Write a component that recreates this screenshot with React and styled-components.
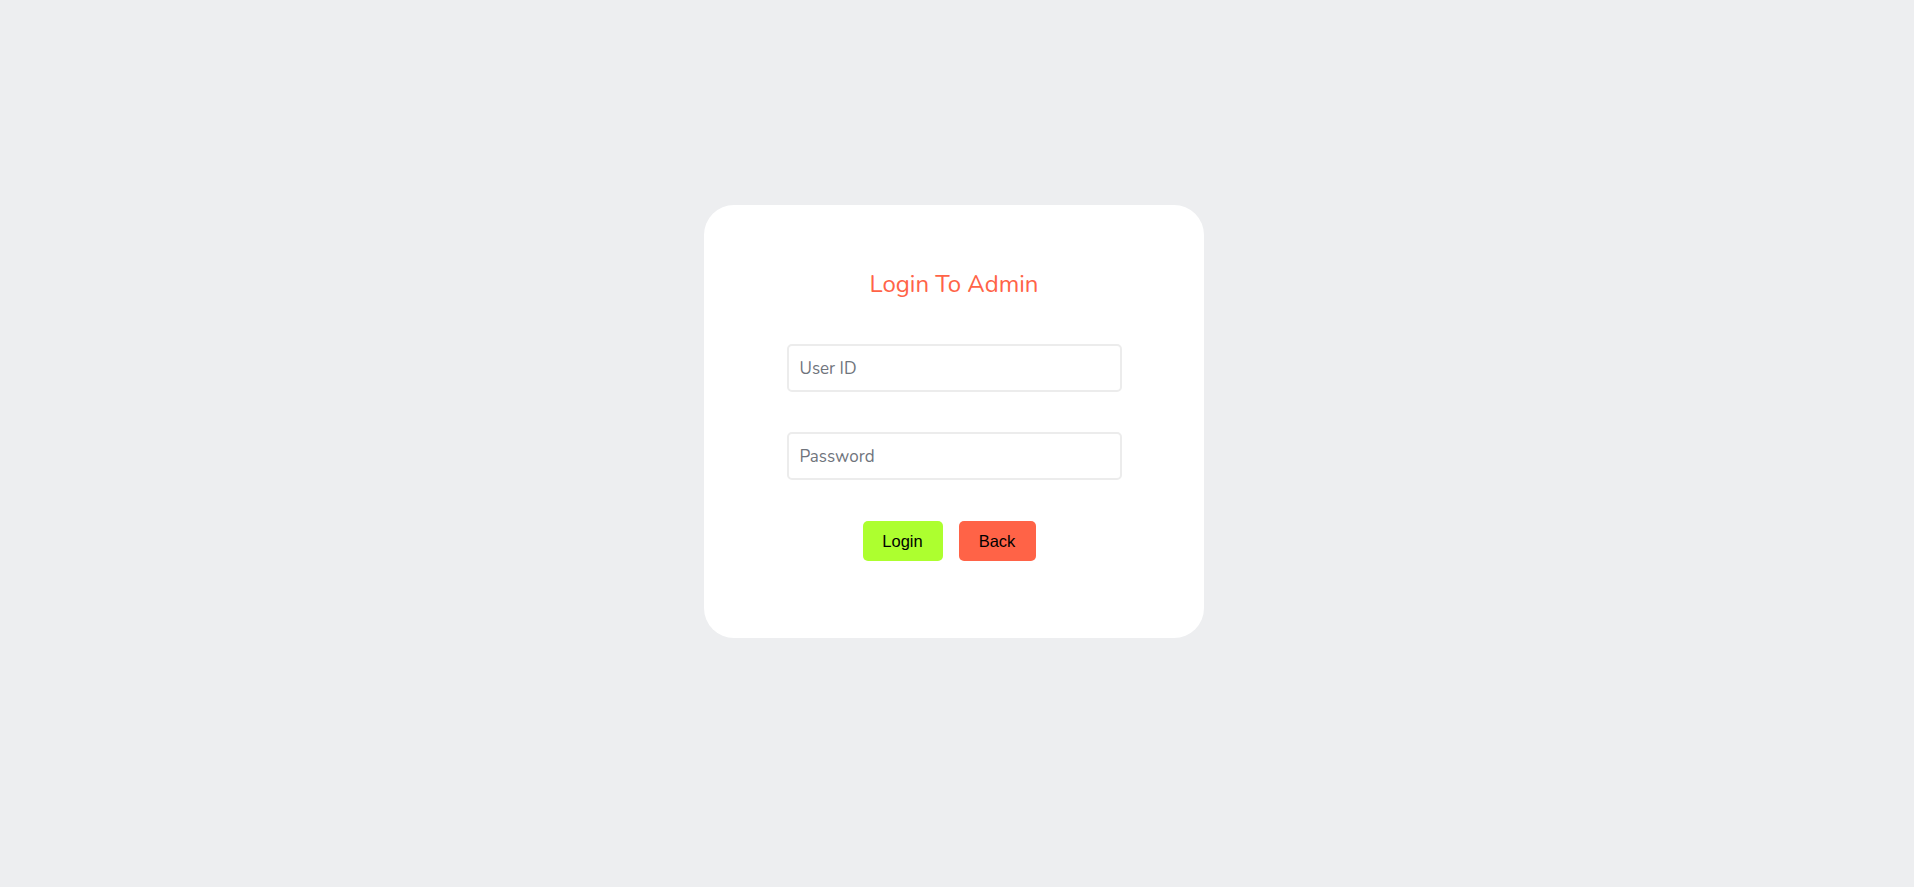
import React from "react";
import styled, { createGlobalStyle } from "styled-components";

const GlobalStyle = createGlobalStyle`
  html, body {
    margin: 0;
    padding: 0;
    background: #edeef0;
  }
  * {
    box-sizing: border-box;
  }
`;

const Page = styled.main`
  min-height: 100vh;
  display: flex;
  justify-content: center;
  align-items: flex-start;
  padding: 205px 6px 0 0;
  font-family: "Nunito", Lato, "Noto Sans", sans-serif;
`;

const Card = styled.form`
  width: 500px;
  height: 433px;
  background: #fff;
  border-radius: 30px;
  display: flex;
  flex-direction: column;
  align-items: center;
  padding-top: 64px;
`;

const Title = styled.h2`
  margin: 0 0 45px;
  font-size: 24px;
  font-weight: 400;
  color: #ff6347;
  line-height: 30px;
`;

const Field = styled.input`
  width: 335px;
  height: 48px;
  margin-bottom: ${(p) => p.$gap || 40}px;
  padding: 0 11px;
  border: 2px solid #ececec;
  border-radius: 5px;
  font-family: "Nunito", Lato, "Noto Sans", sans-serif;
  font-size: 17px;
  color: #333;
  outline: none;

  &::placeholder {
    color: #6f747c;
  }
`;

const Actions = styled.div`
  display: flex;
  gap: 16px;
  margin-right: 10px;
`;

const Button = styled.button`
  height: 40px;
  width: ${(p) => p.$width}px;
  border: none;
  border-radius: 5px;
  background: ${(p) => p.$bg};
  color: #000;
  font-family: Arial, "Liberation Sans", sans-serif;
  font-size: 16.5px;
  cursor: pointer;
`;

export default function App() {
  return (
    <>
      <GlobalStyle />
      <Page>
        <Card onSubmit={(e) => e.preventDefault()}>
          <Title>Login To Admin</Title>
          <Field type="text" placeholder="User ID" />
          <Field type="password" placeholder="Password" $gap={41} />
          <Actions>
            <Button type="submit" $bg="#adff2f" $width={80}>Login</Button>
            <Button type="button" $bg="#ff6347" $width={77}>Back</Button>
          </Actions>
        </Card>
      </Page>
    </>
  );
}
